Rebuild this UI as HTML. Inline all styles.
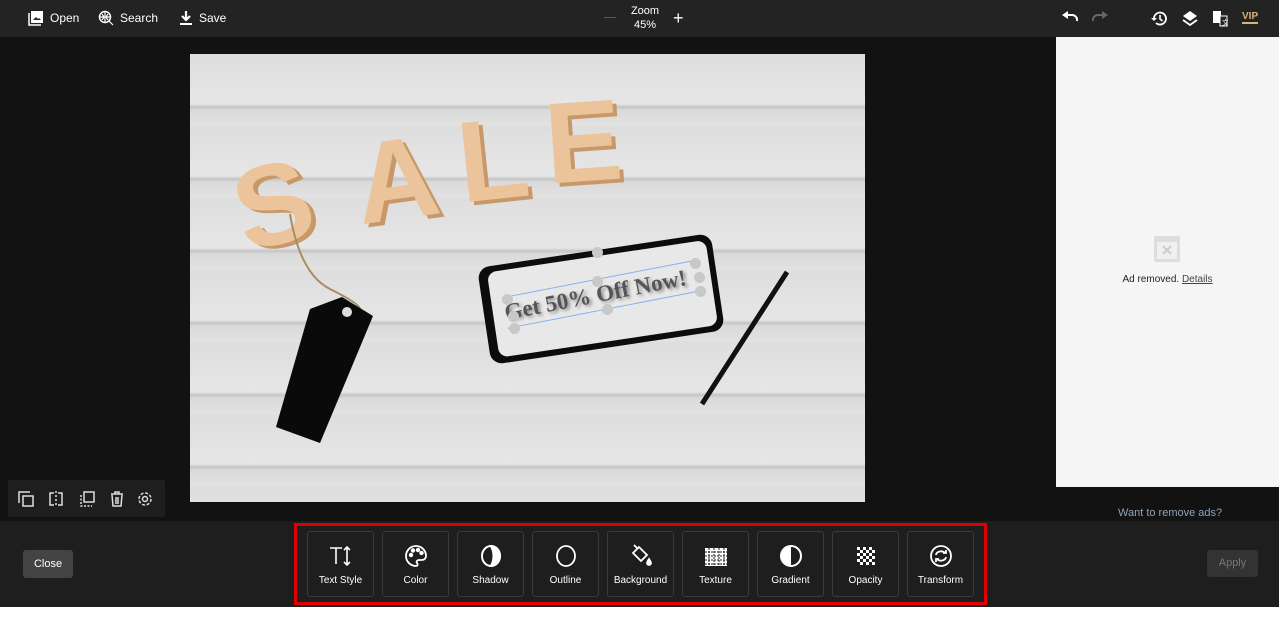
<!DOCTYPE html>
<html><head><style>
body{margin:0;width:1279px;height:638px;background:#fff;font-family:"Liberation Sans",sans-serif;position:relative;overflow:hidden}
.top{position:absolute;left:0;top:0;width:1279px;height:37px;background:#232323;color:#fff;font-size:12px}
.main{position:absolute;left:0;top:37px;width:1279px;height:484px;background:#121212}
.bot{position:absolute;left:0;top:521px;width:1279px;height:86px;background:#1e1e1e}
.ti{position:absolute;top:10px;display:flex;align-items:center;gap:6px}
.img{position:absolute;left:190px;top:54px;width:675px;height:448px;background:repeating-linear-gradient(180deg,#dedede 0,#e6e6e6 50px,#c4c4c4 53px,#dadada 56px,#e2e2e2 72px);overflow:hidden}
.l{position:absolute;font-family:"Liberation Sans",sans-serif;font-weight:bold;color:#ebc49c;font-size:115px;text-shadow:4px 4px 0 #c89868}
.tb{position:absolute;left:294px;top:523px;width:687px;height:76px;border:3px solid #e00000;}
.b{position:absolute;top:5px;width:65px;height:64px;border:1px solid #3a3a3a;border-radius:3px;background:#1e1e1e;color:#fff;font-size:10px;text-align:center}
.b svg{position:absolute;left:21px;top:12px}
.b span{position:absolute;left:0;right:0;top:43px}
.h{position:absolute;width:11px;height:11px;border-radius:50%;background:#c8c8c8}
</style></head><body>
<div class="top">
 <div class="ti" style="left:28px"><svg width="16" height="16" viewBox="0 0 16 16"><rect x="3" y="1" width="12" height="12" fill="#fff"/><path d="M5 10l3-3 2 2 1-1 2 2z" fill="#232323"/><path d="M1 3v12h12" stroke="#fff" fill="none" stroke-width="1.5"/></svg><b style="font-weight:normal">Open</b></div>
 <div class="ti" style="left:98px"><svg width="16" height="16" viewBox="0 0 16 16"><circle cx="7" cy="7" r="5.5" stroke="#fff" fill="none" stroke-width="1.5"/><path d="M2 7h10M7 2v10M4 4q3 3 0 6M10 4q-3 3 0 6M11 11l4 4" stroke="#fff" fill="none" stroke-width="1.2"/></svg>Search</div>
 <div class="ti" style="left:179px"><svg width="14" height="16" viewBox="0 0 14 16"><path d="M7 1v8M3 6l4 4 4-4" stroke="#fff" stroke-width="2.2" fill="none"/><rect x="1" y="13" width="12" height="2" fill="#fff"/></svg>Save</div>
 <div style="position:absolute;left:604px;top:17px;width:12px;height:1px;background:#555"></div>
 <div style="position:absolute;left:628px;top:4px;width:34px;text-align:center;font-size:11px;line-height:14px">Zoom<br>45%</div>
 <div style="position:absolute;left:673px;top:8px;font-size:18px;line-height:20px">+</div>
 <svg style="position:absolute;left:1062px;top:11px" width="16" height="14" viewBox="0 0 16 14"><path d="M5 4h5a5 5 0 0 1 5 6" stroke="#fff" stroke-width="2" fill="none"/><path d="M0 4l6-4v8z" fill="#fff"/></svg>
 <svg style="position:absolute;left:1092px;top:11px" width="16" height="14" viewBox="0 0 16 14"><path d="M11 4H6a5 5 0 0 0-5 6" stroke="#666" stroke-width="2" fill="none"/><path d="M16 4l-6-4v8z" fill="#666"/></svg>
 <svg style="position:absolute;left:1151px;top:10px" width="17" height="17" viewBox="0 0 17 17"><path d="M3 8.5a6 6 0 1 1 2 4.5" stroke="#fff" stroke-width="1.8" fill="none"/><path d="M0 8l3 3 3-3z" fill="#fff"/><path d="M9 5v4l2.5 2" stroke="#fff" stroke-width="1.6" fill="none"/></svg>
 <svg style="position:absolute;left:1182px;top:10px" width="16" height="16" viewBox="0 0 16 16"><path d="M8 1l7 5-7 5-7-5z" fill="#fff"/><path d="M1 10l7 5 7-5" stroke="#fff" stroke-width="1.8" fill="none"/></svg>
 <svg style="position:absolute;left:1212px;top:10px" width="16" height="17" viewBox="0 0 16 17"><rect x="1" y="1" width="8" height="12" fill="#fff"/><rect x="8" y="6" width="7" height="10" stroke="#fff" fill="#232323"/><text x="10" y="15" font-size="7" fill="#fff" font-family="Liberation Sans">文</text></svg>
 <div style="position:absolute;left:1242px;top:11px;color:#d8b27a;font-size:10px;font-weight:bold;border-bottom:2px solid #d8b27a;line-height:11px">VIP</div>
</div>
<div class="main">
 <div style="position:absolute;left:1056px;top:0;width:223px;height:450px;background:#f5f5f5">
  <svg style="position:absolute;left:97px;top:198px" width="28" height="28" viewBox="0 0 28 28"><rect x="1" y="1" width="26" height="26" rx="2" fill="#ddd"/><rect x="4" y="7" width="20" height="17" fill="#f0f0f0"/><path d="M10 11l8 8M18 11l-8 8" stroke="#ccc" stroke-width="2"/></svg>
  <div style="position:absolute;left:0;right:0;top:237px;text-align:center;font-size:10px;color:#222">Ad removed. <u style="color:#444">Details</u></div>
 </div>
 <div style="position:absolute;left:1118px;top:470px;font-size:11px;color:#8fa4b8">Want to remove ads?</div>
 <div style="position:absolute;left:8px;top:443px;width:157px;height:37px;background:#1e1e1e;border-radius:2px">
  <svg style="position:absolute;left:10px;top:11px" width="145" height="16" viewBox="0 0 145 16" fill="none" stroke="#ddd" stroke-width="1.5">
   <rect x="5" y="5" width="10" height="10"/><path d="M1 12V1h11"/>
   <path d="M36 2h-4v12h4M40 2h4v12h-4" /><path d="M38 0v16" stroke-dasharray="2 2"/>
   <rect x="66" y="1" width="10" height="10"/><path d="M63 4v11h11" stroke-dasharray="2 1.5"/>
   <path d="M93 3h12M97 3V1h4v2M94 4l1 11h8l1-11M98 6v7M100 6v7"/>
   <circle cx="127" cy="8" r="2.5"/><circle cx="127" cy="8" r="6" stroke-dasharray="3 1.7"/>
  </svg>
 </div>
</div>
<div class="img">
 <div class="l" style="left:45px;top:85px;transform:rotate(-15deg)">S</div>
 <div class="l" style="left:165px;top:60px;transform:rotate(-8deg)">A</div>
 <div class="l" style="left:268px;top:40px;transform:rotate(-6deg)">L</div>
 <div class="l" style="left:355px;top:22px;transform:rotate(-4deg)">E</div>
 <svg style="position:absolute;left:0;top:0" width="675" height="448"><path d="M100 160q10 60 40 75t30 20" stroke="#a88c64" stroke-width="2" fill="none"/><polygon points="120,255 152,243 183,262 130,389 86,373" fill="#0a0a0a"/><circle cx="157" cy="258" r="5" fill="#ddd"/><path d="M597 218L512 350" stroke="#111" stroke-width="5"/></svg>
 <div style="position:absolute;left:293px;top:196px;width:236px;height:98px;background:#0c0c0c;border-radius:12px;transform:rotate(-8.5deg)">
  <div style="position:absolute;left:9px;top:6px;right:6px;bottom:6px;background:#e8e8e8;border-radius:9px"></div>
 </div>
 <div style="position:absolute;left:313px;top:224px;width:200px;height:30px;line-height:30px;transform:rotate(-11deg);font-family:'Liberation Serif',serif;font-weight:bold;font-size:23px;color:#555;text-shadow:2px 2px 3px #888;white-space:nowrap;border-top:1px solid #8ab0f0;border-bottom:1px solid #8ab0f0">Get 50% Off Now!</div>
 <div class="h" style="left:402px;top:193px"></div><div class="h" style="left:402px;top:222px"></div>
 <div class="h" style="left:312px;top:240px"></div><div class="h" style="left:318px;top:257px"></div><div class="h" style="left:319px;top:269px"></div>
 <div class="h" style="left:412px;top:250px"></div><div class="h" style="left:500px;top:204px"></div><div class="h" style="left:504px;top:218px"></div><div class="h" style="left:505px;top:232px"></div>
</div>
<div class="bot">
 <div style="position:absolute;left:23px;top:29px;width:50px;height:28px;background:#444;border-radius:3px;color:#fff;font-size:11px;text-align:center;line-height:28px">Close</div>
 <div style="position:absolute;left:1207px;top:29px;width:51px;height:27px;background:#333;border-radius:3px;color:#777;font-size:11px;text-align:center;line-height:27px">Apply</div>
</div>
<div class="tb">
 <div class="b" style="left:10px"><svg width="24" height="24" viewBox="0 0 24 24" fill="none" stroke="#fff" stroke-width="1.6"><path d="M1 4h12M7 4v16M18 3v18M15 6l3-3 3 3M15 18l3 3 3-3"/></svg><span>Text Style</span></div>
 <div class="b" style="left:85px"><svg width="24" height="24" viewBox="0 0 24 24" fill="none" stroke="#fff" stroke-width="1.8"><path d="M12 2a10 10 0 0 0 0 20c2 0 2-2 1-3s0-3 2-3h3a4 4 0 0 0 4-4A10 10 0 0 0 12 2z"/><circle cx="7" cy="11" r="1.3" fill="#fff"/><circle cx="9" cy="6.5" r="1.3" fill="#fff"/><circle cx="14" cy="6" r="1.3" fill="#fff"/><circle cx="17.5" cy="9" r="1.3" fill="#fff"/></svg><span>Color</span></div>
 <div class="b" style="left:160px"><svg width="24" height="24" viewBox="0 0 24 24" fill="none" stroke="#fff" stroke-width="2"><ellipse cx="12" cy="12" rx="9" ry="10"/><path d="M12 2q6 10 0 20" /><path d="M12 2a9 10 0 0 1 0 20q5-10 0-20z" fill="#fff"/></svg><span>Shadow</span></div>
 <div class="b" style="left:235px"><svg width="24" height="24" viewBox="0 0 24 24" fill="none" stroke="#fff" stroke-width="1.8"><ellipse cx="12" cy="12" rx="9" ry="10"/></svg><span>Outline</span></div>
 <div class="b" style="left:310px"><svg width="24" height="24" viewBox="0 0 24 24" fill="none" stroke="#fff" stroke-width="1.8"><path d="M10 3l8 8-6 6-8-8zM8 4l-3-3"/><path d="M20 15q-2 3-2 4a2 2 0 0 0 4 0q0-1-2-4z" fill="#fff"/></svg><span>Background</span></div>
 <div class="b" style="left:385px"><svg width="24" height="24" viewBox="0 0 24 24"><rect x="1" y="4" width="22" height="18" fill="#fff"/><path d="M1 8h22M1 12h22M1 16h22M1 20h22M5 4v18M10 4v18M15 4v18M20 4v18" stroke="#1e1e1e" stroke-width="1" stroke-dasharray="2 1"/></svg><span>Texture</span></div>
 <div class="b" style="left:460px"><svg width="24" height="24" viewBox="0 0 24 24"><circle cx="12" cy="12" r="10" fill="none" stroke="#fff" stroke-width="2"/><path d="M12 2a10 10 0 0 0 0 20z" fill="#fff"/></svg><span>Gradient</span></div>
 <div class="b" style="left:535px"><svg width="24" height="24" viewBox="0 0 24 24"><defs><pattern id="c" width="6" height="6" patternUnits="userSpaceOnUse"><rect width="3" height="3" fill="#fff"/><rect x="3" y="3" width="3" height="3" fill="#fff"/></pattern></defs><rect x="3" y="3" width="18" height="18" fill="url(#c)"/></svg><span>Opacity</span></div>
 <div class="b" style="left:610px"><svg width="24" height="24" viewBox="0 0 24 24" fill="none" stroke="#fff" stroke-width="1.8"><circle cx="12" cy="12" r="10"/><path d="M7 11a5 4 0 0 1 9-2M17 13a5 4 0 0 1-9 2"/><path d="M14 9h3V6M10 15H7v3"/></svg><span>Transform</span></div>
</div>
</body></html>
